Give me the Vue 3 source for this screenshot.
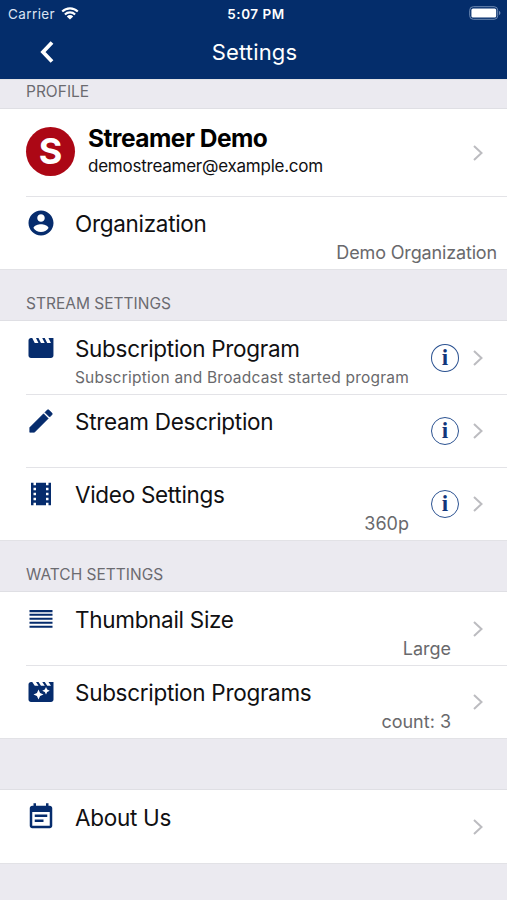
<template>
  <div class="screen">
    <header class="header">
      <div class="status-bar">
        <div class="carrier">
          <span>Carrier</span>
          <svg class="wifi" viewBox="0 0 18 13">
            <path d="M1.2 4.6a11 11 0 0 1 15.6 0M3.9 7.5a7.2 7.2 0 0 1 10.2 0" />
            <path class="wifi-dot" d="M9 12.6 5.8 9.4a4.6 4.6 0 0 1 6.4 0z" />
          </svg>
        </div>
        <div class="time">5:07 PM</div>
        <svg class="battery" viewBox="0 0 32 14">
          <rect class="battery-frame" x="0.7" y="0.7" width="28" height="12.6" rx="3.6" />
          <rect class="battery-fill" x="2.4" y="2.4" width="24.8" height="9.2" rx="1.6" />
          <path class="battery-cap" d="M30 5v4c.9-.3 1.4-1 1.4-2S30.9 5.3 30 5z" />
        </svg>
      </div>
      <div class="nav-bar">
        <svg class="back" viewBox="0 0 16 24">
          <path d="M13 2.5 4 12l9 9.5" />
        </svg>
        <h1>Settings</h1>
      </div>
    </header>

    <section v-for="section in sections" :key="section.id">
      <h2 class="section-title" :class="section.id">{{ section.title }}</h2>
      <div class="rows">
        <div v-if="section.id === 'profile'" class="user">
          <div class="avatar">S</div>
          <div class="user-info">
            <div class="user-name">Streamer Demo</div>
            <div class="user-email">demostreamer@example.com</div>
          </div>
          <svg class="chevron" viewBox="0 0 10 16"><path d="m1 1 7.5 7L1 15" /></svg>
        </div>
        <div v-for="row in section.rows" :key="row.label" class="row" :class="{ plain: row.plain }">
          <svg class="icon" :class="row.icon" viewBox="0 0 24 24">
            <path fill-rule="evenodd" :d="icons[row.icon]" />
          </svg>
          <div class="body">
            <div class="label">{{ row.label }}</div>
            <div v-if="row.hint" class="hint">{{ row.hint }}</div>
            <div v-if="row.value" class="value">{{ row.value }}</div>
          </div>
          <div v-if="row.info" class="info">i</div>
          <svg v-if="!row.plain" class="chevron" viewBox="0 0 10 16"><path d="m1 1 7.5 7L1 15" /></svg>
        </div>
      </div>
    </section>
    <div class="footer"></div>
  </div>
</template>

<script setup>
const icons = {
  account: 'M12 2C6.48 2 2 6.48 2 12s4.48 10 10 10 10-4.48 10-10S17.52 2 12 2zm0 3c1.66 0 3 1.34 3 3s-1.34 3-3 3-3-1.34-3-3 1.34-3 3-3zm0 14.2c-2.5 0-4.71-1.28-6-3.22.03-1.99 4-3.08 6-3.08s5.97 1.09 6 3.08c-1.29 1.94-3.5 3.22-6 3.22z',
  movie: 'M18 4l2 4h-3l-2-4h-2l2 4h-3l-2-4H8l2 4H7L5 4H4c-1.1 0-1.99.9-1.99 2L2 18c0 1.1.9 2 2 2h16c1.1 0 2-.9 2-2V4h-4z',
  pencil: 'M3 17.25V21h3.75L17.81 9.94l-3.75-3.75L3 17.25zM20.71 7.04c.39-.39.39-1.02 0-1.41l-2.34-2.34c-.39-.39-1.02-.39-1.41 0l-1.83 1.83 3.75 3.75 1.83-1.83z',
  film: 'M18 3v2h-2V3H8v2H6V3H4v18h2v-2h2v2h8v-2h2v2h2V3h-2zM8 17H6v-2h2v2zm0-4H6v-2h2v2zm0-4H6V7h2v2zm10 8h-2v-2h2v2zm0-4h-2v-2h2v2zm0-4h-2V7h2v2z',
  lines: 'M2.8 4.8h18.4v1.7H2.8zM2.8 7.7h18.4v1.7H2.8zM2.8 10.9h18.4v1.7H2.8zM2.8 14.1h18.4v1.7H2.8zM2.8 17.3h18.4v1.7H2.8z',
  movieFilter: 'M18 4l2 3h-3l-2-3h-2l2 3h-3l-2-3H8l2 3H7L5 4H4c-1.1 0-1.99.9-1.99 2L2 18c0 1.1.9 2 2 2h16c1.1 0 2-.9 2-2V4h-4zm-6.75 11.25L10 18l-1.25-2.75L6 14l2.75-1.25L10 10l1.25 2.75L14 14l-2.75 1.25zm5.69-3.31L16 14l-.94-2.06L13 11l2.06-.94L16 8l.94 2.06L19 11l-2.06.94z',
  note: 'M17 10H7v2h10v-2zm2-7h-1V1h-2v2H8V1H6v2H5c-1.11 0-1.99.9-1.99 2L3 19c0 1.1.89 2 2 2h14c1.1 0 2-.9 2-2V5c0-1.1-.9-2-2-2zm0 16H5V8h14v11zm-5-5H7v2h7v-2z'
}

const sections = [
  {
    id: 'profile',
    title: 'PROFILE',
    rows: [{ icon: 'account', label: 'Organization', value: 'Demo Organization', plain: true }]
  },
  {
    id: 'stream',
    title: 'STREAM SETTINGS',
    rows: [
      { icon: 'movie', label: 'Subscription Program', hint: 'Subscription and Broadcast started program', info: true },
      { icon: 'pencil', label: 'Stream Description', info: true },
      { icon: 'film', label: 'Video Settings', value: '360p', info: true }
    ]
  },
  {
    id: 'watch',
    title: 'WATCH SETTINGS',
    rows: [
      { icon: 'lines', label: 'Thumbnail Size', value: 'Large' },
      { icon: 'movieFilter', label: 'Subscription Programs', value: 'count: 3' }
    ]
  },
  {
    id: 'about',
    title: '',
    rows: [{ icon: 'note', label: 'About Us' }]
  }
]
</script>

<style>
body {
  margin: 0;
  background: #ebeaf0;
}
</style>

<style scoped>
.screen {
  height: 900px;
  overflow: hidden;
  background: #ebeaf0;
  color: #101012;
  font-family: Inter, "Liberation Sans", sans-serif;
}

.header {
  height: 79px;
  background: #042d6b;
  color: #fff;
}

.status-bar {
  display: grid;
  grid-template-columns: 1fr auto 1fr;
  align-items: center;
  height: 27px;
  padding: 0 6px 0 8px;
  font-size: 13.5px;
}

.carrier {
  display: flex;
  align-items: center;
  gap: 6px;
  color: #dbe4f2;
  letter-spacing: 0.4px;
}

.wifi {
  width: 18px;
  height: 13px;
  margin-top: -1px;
  fill: none;
  stroke: #fff;
  stroke-width: 2.1;
}

.wifi-dot {
  fill: #fff;
  stroke: none;
}

.time {
  padding-left: 3px;
  font-weight: 600;
  letter-spacing: 0.5px;
}

.battery {
  justify-self: end;
  width: 32px;
  height: 14px;
  margin-top: -1px;
}

.battery-frame {
  fill: none;
  stroke: #6f8ab3;
}

.battery-fill {
  fill: #fff;
}

.battery-cap {
  fill: #6f8ab3;
}

.nav-bar {
  display: grid;
  grid-template-columns: 1fr auto 1fr;
  align-items: center;
  height: 50px;
}

.back {
  width: 16px;
  height: 24px;
  margin-left: 39px;
  fill: none;
  stroke: #fff;
  stroke-width: 3.8;
}

h1 {
  margin: 0;
  padding-left: 2px;
  font-size: 22px;
  font-weight: 400;
  letter-spacing: 0.15px;
}

.section-title {
  box-sizing: border-box;
  height: 52px;
  margin: 0;
  padding: 25px 26px 0;
  box-shadow: inset 0 1px #e2e2e6, inset 0 -1px #dfdfe4;
  color: #6b6b70;
  font-size: 15.5px;
  font-weight: 400;
  line-height: 20px;
}

.section-title.profile {
  height: 30px;
  padding-top: 3px;
}

.rows {
  background: #fff;
}

.user,
.row {
  display: flex;
  box-sizing: border-box;
  margin-left: 26px;
  padding-right: 24px;
}

.user {
  align-items: center;
  height: 87px;
}

.avatar {
  width: 49px;
  height: 49px;
  margin: -3px 13px 0 0;
  border-radius: 50%;
  background: #ac0715;
  color: #fff;
  font-size: 36px;
  font-weight: 700;
  line-height: 49px;
  text-align: center;
}

.user-info {
  flex: 1;
  margin-top: -1px;
}

.user-name {
  color: #000;
  font-size: 24.5px;
  font-weight: 700;
  letter-spacing: -0.5px;
  line-height: 29px;
}

.user-email {
  font-size: 17px;
  letter-spacing: -0.24px;
  line-height: 27px;
}

.row {
  height: 73px;
}

.row + .row,
.user + .row {
  box-shadow: inset 0 1px #e3e3e7;
}

.icon {
  width: 30px;
  height: 30px;
  margin-top: 12px;
  fill: #062c6d;
}

.pencil {
  stroke: #062c6d;
  stroke-width: 0.5;
}

.body {
  display: flex;
  flex: 1;
  flex-direction: column;
  margin-right: 22px;
  padding: 13px 0 0 19px;
  white-space: nowrap;
}

.label {
  font-size: 22.5px;
  letter-spacing: -0.3px;
  line-height: 29px;
}

.hint,
.value {
  margin-top: 4px;
  color: #69696c;
  line-height: 22px;
}

.hint {
  font-size: 15.5px;
  letter-spacing: 0.22px;
}

.value {
  align-self: flex-end;
  font-size: 18px;
}

.plain {
  padding-right: 10px;
}

.plain .body {
  margin-right: 0;
}

.plain .value {
  letter-spacing: -0.15px;
}

.info {
  box-sizing: border-box;
  align-self: center;
  width: 28px;
  height: 28px;
  margin-right: 14px;
  border: 1.5px solid #2b5291;
  border-radius: 50%;
  color: #12367b;
  font: bold 23px/26px "Liberation Serif", serif;
  text-align: center;
}

.chevron {
  align-self: center;
  width: 10px;
  height: 16px;
  fill: none;
  stroke: #bcbcc0;
  stroke-width: 2;
}

.footer {
  height: 37px;
  box-shadow: inset 0 1px #e2e2e6;
}
</style>
